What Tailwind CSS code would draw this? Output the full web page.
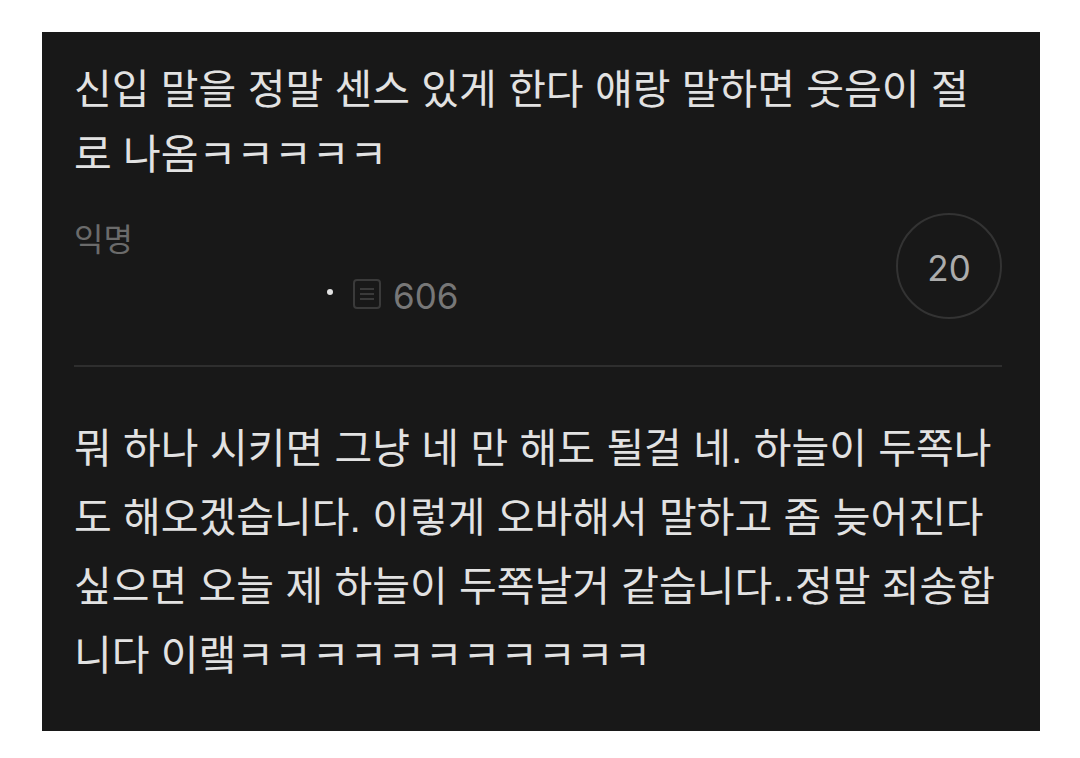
<!DOCTYPE html>
<html lang="ko">

<head>
    <meta charset="UTF-8" />
    <meta content="width=device-width, initial-scale=1.0" name="viewport" />
    <title>익명 게시판</title>
    <script src="https://cdn.jsdelivr.net/npm/@tailwindcss/browser@4"></script>
</head>

<body class="bg-white font-['Liberation_Sans','Noto_Sans_CJK_KR',sans-serif]">
<main class="mr-10 ml-[42px] mt-8 bg-[#181818] pt-[26px] pr-[38px] pb-10 pl-8 text-[#e2e2e2]">
    <!-- Post header -->
    <header class="border-b-2 border-[#2e2e2e] pb-10">
        <h1 class="text-[41px] leading-[65px] break-all">신입 말을 정말 센스 있게 한다 얘랑 말하면 웃음이 절로 나옴ㅋㅋㅋㅋㅋ</h1>
        <div class="mt-[25px] flex items-start justify-between">
            <div>
                <p class="text-[32px] leading-[54px] text-[#6b6b6b]">익명</p>
                <p class="flex items-center pl-[253px] text-[35px] leading-[58px] text-[#777]">
                    <span class="mb-2 size-[6px] rounded-full bg-[#e2e2e2]"></span>
                    <svg class="mb-1 ml-5 h-[30px] w-7" viewBox="0 0 28 30" fill="none" stroke="#3a3a3a" stroke-width="2">
                        <rect x="1" y="1" width="26" height="28" rx="3" />
                        <path d="M7 10h14M7 15h14M7 20h14" />
                    </svg>
                    <span class="ml-3 font-['Inter']">606</span>
                </p>
            </div>
            <button class="size-[106px] rounded-full border-2 border-[#333] pt-1 font-['Inter'] text-[35px] text-[#acacac]">20</button>
        </div>
    </header>
    <!-- Post body -->
    <p class="pt-12 text-[41px] leading-[69px] break-all">뭐 하나 시키면 그냥 네 만 해도 될걸 네. 하늘이 두쪽나도 해오겠습니다. 이렇게 오바해서 말하고 좀 늦어진다 싶으면 오늘 제 하늘이 두쪽날거 같습니다..정말 죄송합니다 이랰ㅋㅋㅋㅋㅋㅋㅋㅋㅋㅋㅋ</p>
</main>
</body>

</html>
